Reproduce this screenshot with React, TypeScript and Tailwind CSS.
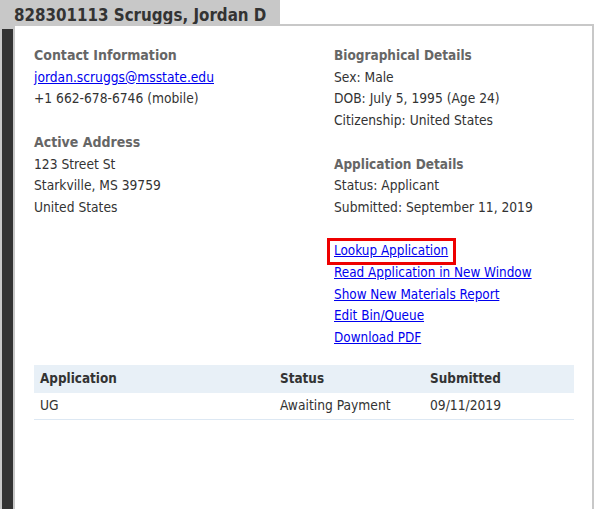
import React from "react";

const F = "font-['DejaVu_Sans_Condensed','DejaVu_Sans',sans-serif]";

export default function App() {
  return (
    <div className={`w-[594px] h-[509px] bg-white flex flex-col overflow-hidden ${F}`}>
      <div className="h-[24px] flex shrink-0">
        <div className="w-[280px] bg-[#c8c8c8] pl-[14px] flex items-center pt-[6px] text-[16.8px] font-bold text-[#333] leading-none">
          828301113 Scruggs, Jordan D
        </div>
        <div className="flex-1 bg-white" />
      </div>
      <div className="flex-1 flex">
        <div className="w-[2px] bg-[#c8c8c8]" />
        <div className="w-[11px] flex flex-col">
          <div className="h-[5px] bg-[#c8c8c8]" />
          <div className="flex-1 bg-[#333333]" />
        </div>
        <div className="flex-1 border-2 border-b-0 border-[#c8c8c8] pl-[19px] pr-[18px] pt-[19px] text-[13.7px] leading-[21.7px] text-[#333]">
          <div className="grid grid-cols-[300px_1fr]">
            <div className="flex flex-col">
              <div className="font-bold text-[#666] text-[14px]">Contact Information</div>
              <a href="#" className="text-[#0000ee] underline">jordan.scruggs@msstate.edu</a>
              <div>+1 662-678-6746 (mobile)</div>
              <div className="h-[21.7px]" />
              <div className="font-bold text-[#666] text-[14px]">Active Address</div>
              <div>123 Street St</div>
              <div>Starkville, MS 39759</div>
              <div>United States</div>
            </div>
            <div className="flex flex-col">
              <div className="font-bold text-[#666] text-[13.5px]">Biographical Details</div>
              <div>Sex: Male</div>
              <div>DOB: July 5, 1995 (Age 24)</div>
              <div>Citizenship: United States</div>
              <div className="h-[21.7px]" />
              <div className="font-bold text-[#666] text-[13.5px]">Application Details</div>
              <div>Status: Applicant</div>
              <div>Submitted: September 11, 2019</div>
              <div className="h-[21.7px]" />
              <div className="flex flex-col items-start text-[13.4px]">
                <span className="relative">
                  <a href="#" className="text-[#0000ee] underline">Lookup Application</a>
                  <span className="absolute left-[-7px] right-[-8px] top-[-2px] bottom-[-3px] border-[3px] border-[#ee0000]" />
                </span>
                <a href="#" className="text-[#0000ee] underline">Read Application in New Window</a>
                <a href="#" className="text-[#0000ee] underline">Show New Materials Report</a>
                <a href="#" className="text-[#0000ee] underline">Edit Bin/Queue</a>
                <a href="#" className="text-[#0000ee] underline">Download PDF</a>
              </div>
            </div>
          </div>
          <div className="mt-[16px]">
            <div className="grid grid-cols-[240px_150px_1fr] bg-[#e8f0f7] h-[28px] items-center font-bold text-[13.4px] text-[#333]">
              <div className="pl-[6px]">Application</div>
              <div className="pl-[6px]">Status</div>
              <div className="pl-[6px]">Submitted</div>
            </div>
            <div className="grid grid-cols-[240px_150px_1fr] h-[27px] items-center border-b border-[#dde8f3]">
              <div className="pl-[6px]">UG</div>
              <div className="pl-[6px]">Awaiting Payment</div>
              <div className="pl-[6px]">09/11/2019</div>
            </div>
          </div>
        </div>
      </div>
    </div>
  );
}
